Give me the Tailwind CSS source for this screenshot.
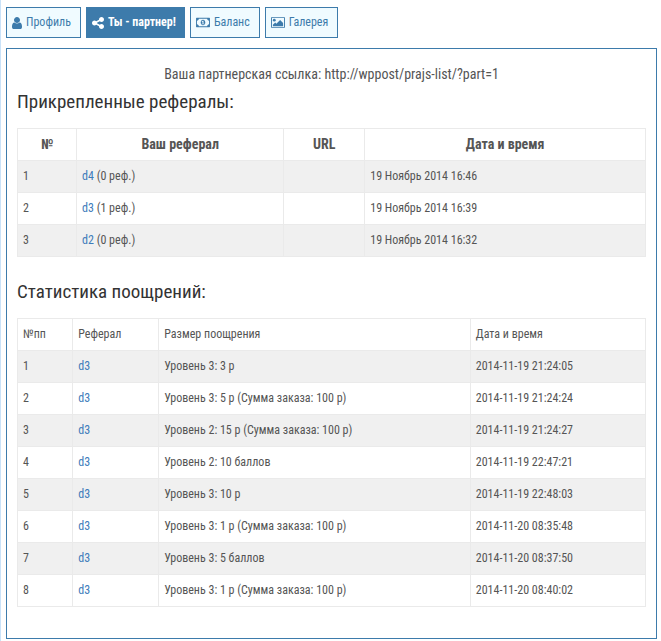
<!DOCTYPE html>
<html lang="ru">
<head>
    <meta charset="UTF-8">
    <meta name="viewport" content="width=device-width, initial-scale=1.0">
    <title>Ты - партнер!</title>
    <script src="https://cdn.jsdelivr.net/npm/@tailwindcss/browser@4"></script>
</head>
<body class="min-h-screen border-l border-[#c9e2f9] bg-white pt-[7px] pr-1 pb-[2px] pl-[5px] font-['Roboto_Condensed','Roboto',sans-serif] text-[12px] leading-[21px] text-[#555]">

    <!-- Tabs -->
    <nav class="mb-[10px] flex gap-[5px]">
        <button type="button" class="flex h-[31px] items-center gap-1 border border-[#3d7bab] bg-[#f0fbff] pr-[9px] pl-[5px] text-[#3d7bab]">
            <svg class="h-[14px] w-[10px]" viewBox="0 0 1280 1792" fill="currentColor"><path d="M1280 1399q0 109-62.5 187t-150.5 78h-854q-88 0-150.5-78t-62.5-187q0-85 8.5-160.5t31.5-152 58.5-131 94-89 134.5-34.5q131 128 313 128t313-128q76 0 134.5 34.5t94 89 58.5 131 31.5 152 8.5 160.5zm-256-887q0 159-112.5 271.5t-271.5 112.5-271.5-112.5-112.5-271.5 112.5-271.5 271.5-112.5 271.5 112.5 112.5 271.5z"/></svg>
            <span>Профиль</span>
        </button>
        <button type="button" class="flex h-[31px] items-center gap-1 border border-[#3d7bab] bg-[#3d7bab] pr-2 pl-[5px] font-bold text-white">
            <svg class="h-[14px] w-[12px]" viewBox="0 0 1536 1792" fill="currentColor"><path d="M1216 1024q133 0 226.500 93.500t93.500 226.500-93.500 226.500-226.500 93.500-226.500-93.500-93.500-226.500q0-12 2-34l-360-180q-92 86-218 86-133 0-226.500-93.500t-93.500-226.500 93.500-226.500 226.500-93.500q126 0 218 86l360-180q-2-22-2-34 0-133 93.500-226.500t226.500-93.500 226.500 93.500 93.500 226.500-93.500 226.500-226.500 93.500q-126 0-218-86l-360 180q2 22 2 34t-2 34l360 180q92-86 218-86z"/></svg>
            <span>Ты - партнер!</span>
        </button>
        <button type="button" class="flex h-[31px] items-center gap-1 border border-[#3d7bab] bg-[#f0fbff] pr-[9px] pl-[5px] text-[#3d7bab]">
            <svg class="h-[13px] w-[14px]" viewBox="0 0 1920 1792" fill="currentColor"><path fill-rule="evenodd" d="M64 256h1792q64 0 64 64v1152q0 64-64 64H64q-64 0-64-64V320q0-64 64-64zM384 384q0 106-75 181t-181 75v512q106 0 181 75t75 181h1152q0-106 75-181t181-75V640q-106 0-181-75t-75-181zM960 512c190 0 320 172 320 384s-130 384-320 384-320-172-320-384 130-384 320-384zM768 1152h384v-96h-128V640H910L762 778l77 80 57-58v256H768z"/></svg>
            <span>Баланс</span>
        </button>
        <button type="button" class="flex h-[31px] items-center gap-1 border border-[#3d7bab] bg-[#f0fbff] pr-[9px] pl-[5px] text-[#3d7bab]">
            <svg class="h-[13px] w-[14px]" viewBox="0 0 1920 1792" fill="currentColor"><path fill-rule="evenodd" d="M160 128h1600q160 0 160 160v1216q0 160-160 160H160Q0 1664 0 1504V288Q0 128 160 128zM160 256q-32 0-32 32v1216q0 32 32 32h1600q32 0 32-32V288q0-32-32-32z"/><circle cx="448" cy="576" r="192"/><path d="M1664 960v448H256v-192l320-320 160 160 512-512z"/></svg>
            <span>Галерея</span>
        </button>
    </nav>

    <main class="border border-[#3d7bab] px-[10px] pt-[14px] pb-[31px]">
        <p class="text-center text-[14px] leading-[22px]">Ваша партнерская ссылка: http://wppost/prajs-list/?part=1</p>

        <!-- Referrals -->
        <h2 class="mb-3 pt-[3px] text-[19px] leading-7 text-[#333]">Прикрепленные рефералы:</h2>
        <table class="w-full table-fixed border-collapse [&_td]:border [&_td]:border-[#eaeaea] [&_td]:px-[5px] [&_td]:py-[5px] [&_th]:border [&_th]:border-[#eaeaea] [&_th]:px-[5px] [&_th]:py-[5px]">
            <colgroup>
                <col class="w-[9.4%]">
                <col class="w-[33%]">
                <col class="w-[12.9%]">
                <col>
            </colgroup>
            <thead>
                <tr class="text-[14px]"><th>№</th><th>Ваш реферал</th><th>URL</th><th>Дата и время</th></tr>
            </thead>
            <tbody>
                <tr class="bg-[#f0f0f0]"><td>1</td><td><a href="#" class="text-[#3d7bba]">d4</a> (0 реф.)</td><td></td><td>19 Ноябрь 2014 16:46</td></tr>
                <tr><td>2</td><td><a href="#" class="text-[#3d7bba]">d3</a> (1 реф.)</td><td></td><td>19 Ноябрь 2014 16:39</td></tr>
                <tr class="bg-[#f0f0f0]"><td>3</td><td><a href="#" class="text-[#3d7bba]">d2</a> (0 реф.)</td><td></td><td>19 Ноябрь 2014 16:32</td></tr>
            </tbody>
        </table>

        <!-- Reward statistics -->
        <h2 class="mt-[21px] mb-3 text-[19px] leading-7 text-[#333]">Статистика поощрений:</h2>
        <table class="w-full table-fixed border-collapse [&_td]:border [&_td]:border-[#eaeaea] [&_td]:px-[5px] [&_td]:py-[5px]">
            <colgroup>
                <col class="w-[8.8%]">
                <col class="w-[13.7%]">
                <col class="w-[49.6%]">
                <col>
            </colgroup>
            <tbody>
                <tr><td>№пп</td><td>Реферал</td><td>Размер поощрения</td><td>Дата и время</td></tr>
                <tr class="bg-[#f0f0f0]"><td>1</td><td><a href="#" class="text-[#3d7bba]">d3</a></td><td>Уровень 3: 3 р</td><td>2014-11-19 21:24:05</td></tr>
                <tr><td>2</td><td><a href="#" class="text-[#3d7bba]">d3</a></td><td>Уровень 3: 5 р (Сумма заказа: 100 р)</td><td>2014-11-19 21:24:24</td></tr>
                <tr class="bg-[#f0f0f0]"><td>3</td><td><a href="#" class="text-[#3d7bba]">d3</a></td><td>Уровень 2: 15 р (Сумма заказа: 100 р)</td><td>2014-11-19 21:24:27</td></tr>
                <tr><td>4</td><td><a href="#" class="text-[#3d7bba]">d3</a></td><td>Уровень 2: 10 баллов</td><td>2014-11-19 22:47:21</td></tr>
                <tr class="bg-[#f0f0f0]"><td>5</td><td><a href="#" class="text-[#3d7bba]">d3</a></td><td>Уровень 3: 10 р</td><td>2014-11-19 22:48:03</td></tr>
                <tr><td>6</td><td><a href="#" class="text-[#3d7bba]">d3</a></td><td>Уровень 3: 1 р (Сумма заказа: 100 р)</td><td>2014-11-20 08:35:48</td></tr>
                <tr class="bg-[#f0f0f0]"><td>7</td><td><a href="#" class="text-[#3d7bba]">d3</a></td><td>Уровень 3: 5 баллов</td><td>2014-11-20 08:37:50</td></tr>
                <tr><td>8</td><td><a href="#" class="text-[#3d7bba]">d3</a></td><td>Уровень 3: 1 р (Сумма заказа: 100 р)</td><td>2014-11-20 08:40:02</td></tr>
            </tbody>
        </table>
    </main>

</body>
</html>
